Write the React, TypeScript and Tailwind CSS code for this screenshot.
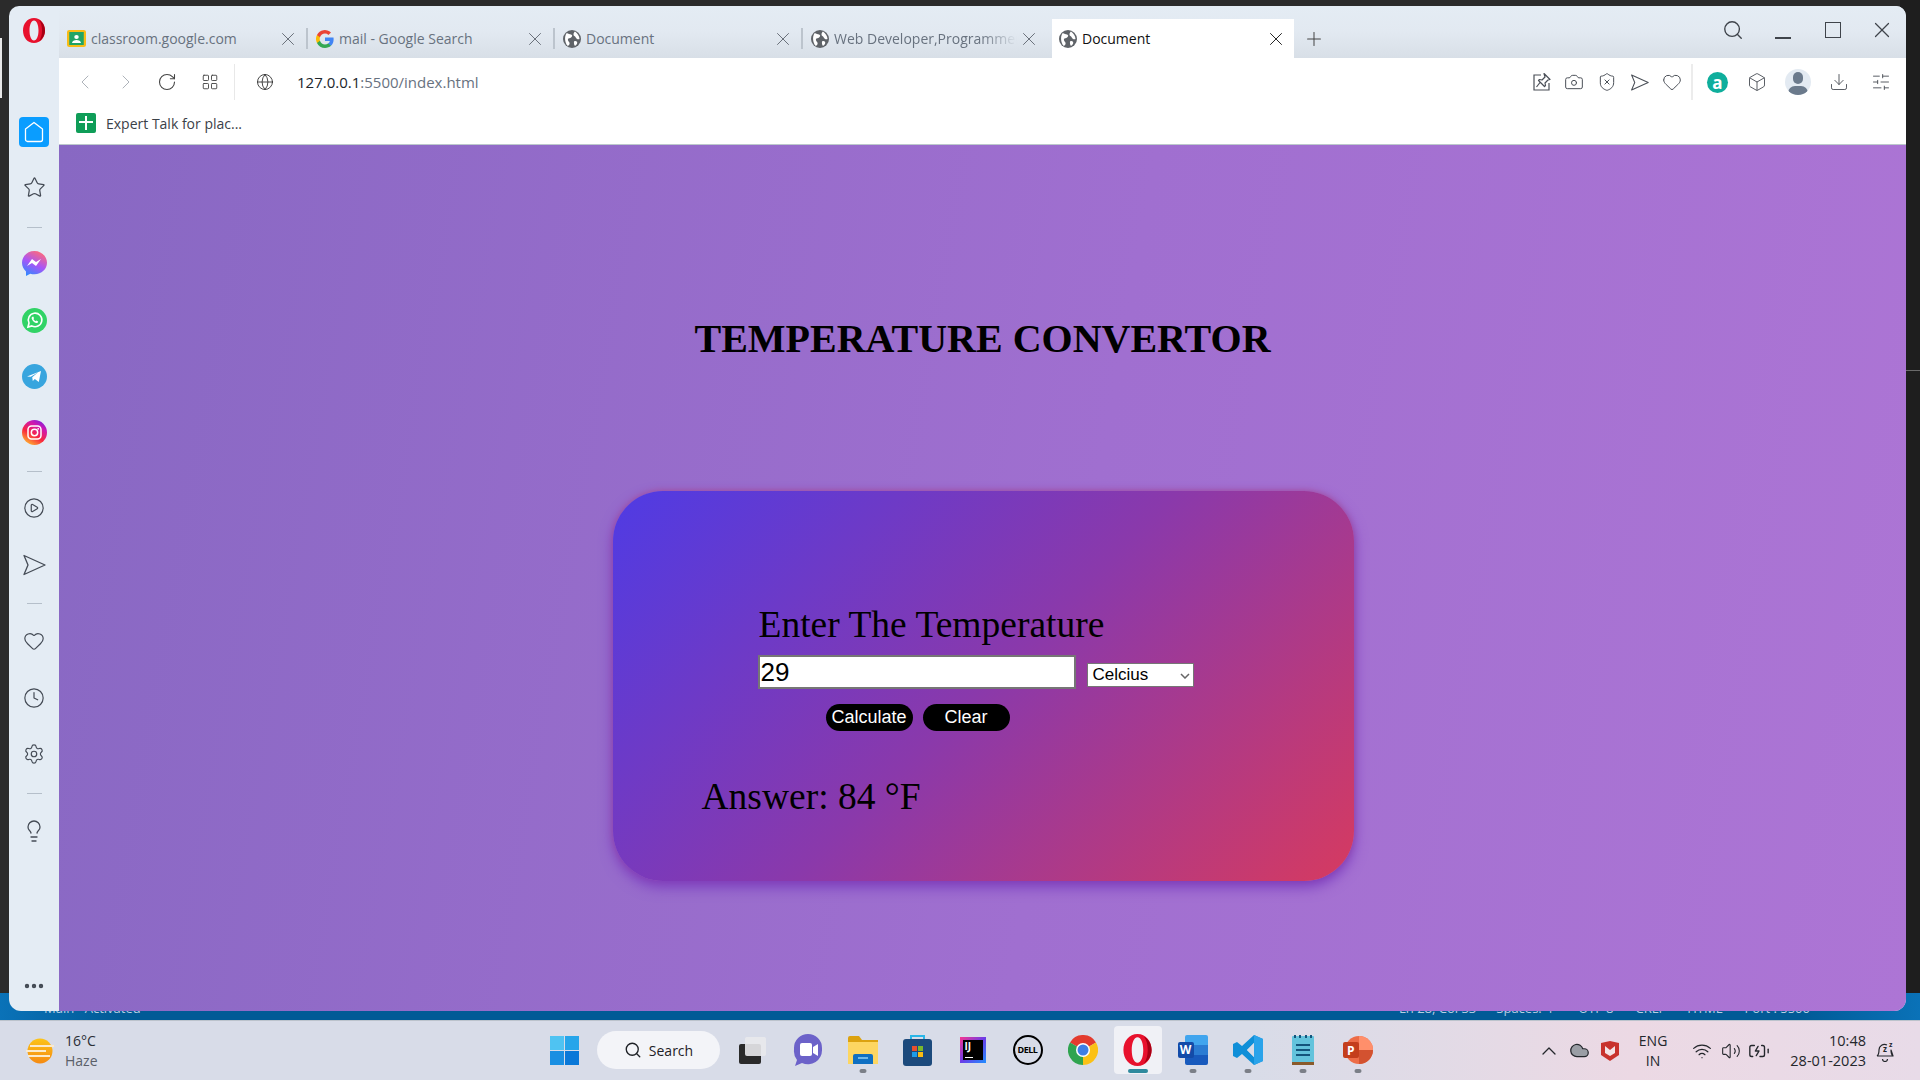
import React from 'react'
import {
  X, Plus, Search, ChevronLeft, ChevronRight, RotateCw, LayoutGrid, Globe, Camera, ShieldX, Heart, Box,
  Download, SlidersHorizontal, Star, CirclePlay, Clock, Settings, Lightbulb, MoreHorizontal, ChevronUp, Cloud, Wifi, Volume2, BatteryCharging,
} from 'lucide-react'

const sans = "font-['Open_Sans','Noto_Sans',sans-serif]"

const Earth = () => (
  <svg width="18" height="18" viewBox="0 0 24 24" className="shrink-0">
    <circle cx="12" cy="12" r="12" fill="#5f6368" />
    <path d="M5 4c3 2 6 1 7 3s-2 4-4 4-2 3 0 5 0 5-2 5C3 18 1 9 5 4zM16 2c3 2 6 6 6 10-2 1-4 0-5-2s-3-2-3-4 1-3 2-4zM15 15c2-1 4 0 4 2s-2 4-3 4-2-5-1-6z" fill="#fff" />
  </svg>
)

const Tab = ({ icon, title, width, active, faded }: { icon: React.ReactNode; title: string; width: string; active?: boolean; faded?: boolean }) => (
  <div className={`flex items-center h-[39px] shrink-0 ${active ? 'pl-[7px] bg-white text-[#111]' : 'pl-[8px] text-[#68727f]'} ${width}`}>
    {icon}
    <span className={`ml-[5px] text-[14px] whitespace-nowrap overflow-hidden flex-1 ${faded ? 'mask-r-from-80%' : ''}`}>{title}</span>
    <X size={22} strokeWidth={1} className={`ml-[1px] shrink-0 ${faded ? 'mr-[12px]' : 'mr-[7px]'} ${active ? 'text-[#111]' : 'text-[#5f6670]'}`} />
  </div>
)

const Divider = () => <div className="w-[2px] h-[21px] mb-[9px] bg-[#bcc4cd] shrink-0" />
const SideRule = ({ className }: { className: string }) => <div className={`w-[15px] h-px bg-[#b5bfca] ${className}`} />

const SendOutline = ({ size, className }: { size: number; className?: string }) => (
  <svg width={size} height={size} viewBox="0 0 24 24" fill="none" stroke="currentColor" strokeWidth="1.300" strokeLinejoin="round" className={className}>
    <path d="M2 2.500L23 12 2 21.500 6 12z" />
  </svg>
)

const OperaO = ({ w = 22, h = 25 }: { w?: number; h?: number }) => (
  <svg width={w} height={h} viewBox="0 0 22 25">
    <path fillRule="evenodd" d="M11 0c6.500 0 11 5.500 11 12.500S17.500 25 11 25 0 19.500 0 12.500 4.500 0 11 0zm0 2.500c-2.800 0-4.500 4.500-4.500 10s1.700 10 4.500 10 4.500-4.500 4.500-10-1.700-10-4.500-10z" fill="#e8112d" />
    <path d="M16 2c3.600 2 6 5.800 6 10.500S19.600 21 16 23c2-2.500 3-6.200 3-10.500S18 4.500 16 2z" fill="#a70014" />
  </svg>
)

const Messenger = () => (
  <svg width="25" height="25" viewBox="0 0 25 25">
    <defs>
      <linearGradient id="msg" x1="0.2" y1="1" x2="0.7" y2="0">
        <stop offset="0" stopColor="#2a8cff" />
        <stop offset="0.5" stopColor="#a855f7" />
        <stop offset="1" stopColor="#ff6a7a" />
      </linearGradient>
    </defs>
    <path d="M12.500 0C5.500 0 0 5.200 0 11.800c0 3.500 1.500 6.500 4 8.600V25l4.300-2.300c1.300.4 2.700.6 4.200.6 7 0 12.500-5.200 12.500-11.500S19.500 0 12.500 0z" fill="url(#msg)" />
    <path d="M5 15l5-7 4 3 5-3-5 7-4-3z" fill="#fff" />
  </svg>
)

const Whatsapp = () => (
  <svg width="25" height="25" viewBox="0 0 25 25">
    <circle cx="12.500" cy="12.500" r="12.500" fill="#31d366" />
    <path d="M6 19l1-4a6.800 6.800 0 1 1 2.800 2.900z" fill="none" stroke="#fff" strokeWidth="1.600" />
    <path d="M10 9c-1 1 0 3 1.500 4.500s3.500 2 4.300 1l.4-1-1.800-1-.8.700c-1-.4-1.800-1.200-2.200-2.100l.7-.8-.9-1.800z" fill="#fff" />
  </svg>
)

const Telegram = () => (
  <svg width="25" height="25" viewBox="0 0 25 25">
    <circle cx="12.500" cy="12.500" r="12.500" fill="#38a5de" />
    <path d="M5 12.500L19 7l-2.200 11-4-3-2 2-.6-3.800 6-5-7.500 4.500z" fill="#fff" />
  </svg>
)

const Instagram = () => (
  <svg width="25" height="25" viewBox="0 0 25 25">
    <defs>
      <linearGradient id="ig" x1="0.2" y1="1" x2="0.8" y2="0">
        <stop offset="0" stopColor="#ffc02e" />
        <stop offset="0.4" stopColor="#f8263f" />
        <stop offset="0.75" stopColor="#d018b0" />
        <stop offset="1" stopColor="#7a22e0" />
      </linearGradient>
    </defs>
    <circle cx="12.500" cy="12.500" r="12.500" fill="url(#ig)" />
    <rect x="6" y="6" width="13" height="13" rx="3.500" fill="none" stroke="#fff" strokeWidth="1.500" />
    <circle cx="12.500" cy="12.500" r="3.200" fill="none" stroke="#fff" strokeWidth="1.500" />
    <circle cx="16.200" cy="8.800" r="0.900" fill="#fff" />
  </svg>
)

const Chrome = () => (
  <svg width="30" height="30" viewBox="0 0 30 30">
    <path d="M15 15L2 7.500A15 15 0 0 1 28 7.500z" fill="#e33b2e" />
    <path d="M15 15L28 7.500A15 15 0 0 1 15 30z" fill="#fbc116" />
    <path d="M15 15L15 30A15 15 0 0 1 2 7.500z" fill="#2fa44f" />
    <circle cx="15" cy="15" r="7" fill="#fff" />
    <circle cx="15" cy="15" r="5.500" fill="#3f7fe6" />
  </svg>
)

const TaskSlot = ({ children, dot, active }: { children: React.ReactNode; dot?: boolean; active?: boolean }) => (
  <div className={`relative w-[48px] h-[48px] mx-[3.500px] flex items-center justify-center rounded-[4px] ${active ? 'bg-[#f0f1f6]' : ''}`}>
    {children}
    {dot && <div className="absolute bottom-[1px] left-1/2 -translate-x-1/2 w-[7px] h-[4px] rounded-full bg-[#7b7f87]" />}
    {active && <div className="absolute bottom-[1px] left-1/2 -translate-x-1/2 w-[20px] h-[4px] rounded-full bg-[#2f8a9e]" />}
  </div>
)

export default function App() {
  return (
    <div className={`w-[1920px] h-[1080px] flex flex-col overflow-hidden ${sans}`}>
      <div className="relative h-[1020px] bg-[linear-gradient(90deg,#2b2b2b_0px,#2b2b2b_1900px,#1e1e1e_1900px)] pt-[6px] pl-[9px]">
        <div className="absolute left-0 top-[38px] w-[2px] h-[60px] bg-[#e8e8e8]" />
        <div className="absolute right-0 top-[370px] w-[14px] h-px bg-[#6a6a6a]" />
        {/* vscode status bar peeking out behind the browser */}
        <div className="absolute bottom-0 left-0 right-0 h-[27px] pt-[4px] leading-[22px] text-[13px] text-[#b5cfe2] flex bg-[linear-gradient(90deg,#0a72b8_0px,#015a96_120px,#015a96_1800px,#0a72b8_1920px)]">
          <span className="ml-[44px]">Main* Activated</span>
          <span className="mr-[20px] ml-auto">Ln 28, Col 33</span>
          <span className="mr-[26px]">Spaces: 4</span>
          <span className="mr-[22px]">UTF-8</span>
          <span className="mr-[22px]">CRLF</span>
          <span className="mr-[22px]">HTML</span>
          <span className="mr-[110px]">Port : 5500</span>
        </div>

        <div className="relative w-[1897px] h-[1005px] rounded-t-[10px] rounded-b-[12px] overflow-hidden flex bg-[#e4ecf4]">
          <aside className="w-[50px] flex flex-col items-center shrink-0 pt-[12px] text-[#444b55]">
            <div className="h-[21px] mb-[78px]"><OperaO /></div>
            <div className="w-[30px] h-[30px] rounded-[4px] bg-[#0a9dff] flex items-center justify-center shrink-0">
              <svg width="20" height="22" viewBox="0 0 20 22" fill="none" stroke="#fff" strokeWidth="1.300">
                <path d="M10 1.500L18.500 8v10.500a2 2 0 0 1-2 2h-13a2 2 0 0 1-2-2V8z" strokeLinejoin="round" />
              </svg>
            </div>
            <Star size={23} strokeWidth={1.300} className="mt-[29px] shrink-0" />
            <SideRule className="mt-[28px]" />
            <div className="mt-[23px]"><Messenger /></div>
            <div className="mt-[32px]"><Whatsapp /></div>
            <div className="mt-[31px]"><Telegram /></div>
            <div className="mt-[31px]"><Instagram /></div>
            <SideRule className="mt-[26px]" />
            <CirclePlay size={22} strokeWidth={1.300} className="mt-[25px] shrink-0" />
            <SendOutline size={24} className="mt-[34px] shrink-0" />
            <SideRule className="mt-[26px]" />
            <Heart size={22} strokeWidth={1.300} className="mt-[26px] shrink-0" />
            <Clock size={22} strokeWidth={1.300} className="mt-[35px] shrink-0" />
            <Settings size={22} strokeWidth={1.300} className="mt-[34px] shrink-0" />
            <SideRule className="mt-[28px]" />
            <Lightbulb size={24} strokeWidth={1.300} className="mt-[25px] shrink-0" />
            <MoreHorizontal size={24} strokeWidth={2.400} className="mt-auto mb-[13px] shrink-0" />
          </aside>

          <main className="flex-1 flex flex-col min-w-0">
            <div className="h-[52px] flex items-end bg-[linear-gradient(180deg,#e4ecf4_0%,#e2e9f1_50%,#d8dfe7_100%)] relative shrink-0">
              <Tab width="w-[247px]" title="classroom.google.com" icon={
                <svg width="19" height="17" viewBox="0 0 17 17" className="shrink-0" preserveAspectRatio="none">
                  <rect width="17" height="17" rx="2" fill="#f9bc15" />
                  <rect x="2" y="2" width="13" height="13" fill="#21a465" />
                  <circle cx="8.500" cy="7" r="2" fill="#fff" />
                  <path d="M4.500 13c0-2 2-3 4-3s4 1 4 3z" fill="#fff" />
                </svg>} />
              <Divider />
              <Tab width="w-[245px]" title="mail - Google Search" icon={
                <svg width="18" height="18" viewBox="0 0 24 24" className="shrink-0">
                  <path d="M23.500 12.300c0-.8-.1-1.600-.2-2.300H12v4.500h6.500a5.500 5.500 0 0 1-2.400 3.600v3h3.900c2.300-2.100 3.500-5.200 3.500-8.800z" fill="#4285f4" />
                  <path d="M12 24c3.200 0 6-1.100 8-2.900l-3.900-3c-1.100.7-2.500 1.200-4.100 1.200-3.100 0-5.800-2.100-6.700-5H1.300v3.100A12 12 0 0 0 12 24z" fill="#34a853" />
                  <path d="M5.300 14.300a7.200 7.200 0 0 1 0-4.600V6.600h-4a12 12 0 0 0 0 10.800z" fill="#fbbc05" />
                  <path d="M12 4.800c1.800 0 3.300.6 4.600 1.800L20 3.200A12 12 0 0 0 1.300 6.600l4 3.100c.9-2.800 3.600-4.900 6.700-4.900z" fill="#ea4335" />
                </svg>} />
              <Divider />
              <Tab width="w-[246px]" title="Document" icon={<Earth />} />
              <Divider />
              <Tab width="w-[249px]" faded title="Web Developer,Programmer" icon={<Earth />} />
              <Tab width="w-[242px]" active title="Document" icon={<Earth />} />
              <Plus size={22} strokeWidth={1.100} className="ml-[9px] mb-[8px] text-[#444]" />
              <div className="absolute right-0 top-[11px] h-[26px] flex items-center text-[#3f444b]">
                <Search size={22} strokeWidth={1.500} className="mr-[31px]" />
                <div className="w-[16px] h-[1.500px] bg-[#3f444b] mr-[34px] translate-y-[8px]" />
                <div className="w-[16px] h-[16px] border border-[#3f444b] mr-[28px]" />
                <X size={26} strokeWidth={1.100} className="mr-[11px]" />
              </div>
            </div>

            <div className="h-[48px] bg-white flex items-center shrink-0 relative">
              <ChevronLeft size={24} strokeWidth={1} className="ml-[14px] text-[#aeb3ba]" />
              <ChevronRight size={24} strokeWidth={1} className="ml-[17px] text-[#aeb3ba]" />
              <RotateCw size={20} strokeWidth={1.300} className="ml-[19px] text-[#444]" />
              <LayoutGrid size={18} strokeWidth={1.200} className="ml-[24px] text-[#444]" />
              <div className="w-px h-[36px] bg-[#e8e8e8] ml-[15px]" />
              <Globe size={18} strokeWidth={1.200} className="ml-[21px] text-[#333]" />
              <span className="ml-[23px] text-[15px]"><span className="text-[#20252b]">127.0.0.1</span><span className="text-[#68727f]">:5500/index.html</span></span>
              <div className="ml-auto flex items-center text-[#4a4f57]">
                <svg width="20" height="20" viewBox="0 0 20 20" fill="none" stroke="currentColor" strokeWidth="1.200" className="mr-[12px]">
                  <path d="M9 3H2v15h15v-7" />
                  <path d="M12 1.500l6 6-2 .5-3 3 .5 2.500-1 1-6-6 1-1 2.500.5 3-3zM8 10.500L4.500 15" strokeLinejoin="round" />
                </svg>
                <Camera size={20} strokeWidth={1.200} className="mr-[13px]" />
                <ShieldX size={20} strokeWidth={1.200} className="mr-[13px]" />
                <SendOutline size={19} className="mr-[13px]" />
                <Heart size={20} strokeWidth={1.200} className="mr-[9px]" />
                <div className="w-[2px] h-[36px] bg-[#ececec] mr-[14.500px]" />
                <div className="w-[21px] h-[21px] rounded-full bg-[#0fae9c] text-white text-[17px] font-bold flex items-center justify-center leading-none mr-[19px]">a</div>
                <Box size={20} strokeWidth={1.100} className="mr-[18px]" />
                <div className="w-[26px] h-[26px] rounded-full bg-[#e3eaf2] relative overflow-hidden mr-[18px]">
                  <div className="absolute left-[8px] top-[3px] w-[10px] h-[12px] rounded-full bg-[#6b7a8c]" />
                  <div className="absolute left-[3px] top-[17px] w-[20px] h-[14px] rounded-full bg-[#6b7a8c]" />
                </div>
                <Download size={20} strokeWidth={1.100} className="mr-[22px]" />
                <SlidersHorizontal size={20} strokeWidth={1.100} className="mr-[15px]" />
              </div>
            </div>

            <div className="h-[39px] bg-white flex items-center shrink-0 pl-[17px] pb-[4px] border-b border-[#bcc8cc]">
              <svg width="20" height="20" viewBox="0 0 20 20">
                <rect width="20" height="20" rx="2" fill="#0f9d58" />
                <path d="M9 3h2v5h6v2h-6v7H9v-7H3V8h6z" fill="#fff" />
              </svg>
              <span className="ml-[10px] text-[14px] text-[#3b4148]">Expert Talk for plac...</span>
            </div>

            <section className="flex-1 flex flex-col items-center bg-[linear-gradient(100deg,#8868c3_0%,#a06fd0_55%,#ad75d5_100%)] font-['Liberation_Serif',serif] text-black">
              <h1 className="mt-[171px] text-[40px] leading-[46px] font-bold">TEMPERATURE CONVERTOR</h1>
              <div className="mt-[129px] ml-[1px] w-[741px] h-[390px] rounded-[50px] bg-[linear-gradient(135deg,#4f3be4_0%,#8a39ab_50%,#d63a60_100%)] shadow-[0_6px_14px_#7a3cc0,0_0_6px_#b0508f] flex flex-col">
                <div className="ml-[146px] mt-[111px] text-[37.500px] leading-[46px]">Enter The Temperature</div>
                <div className="ml-[145px] mt-[7px] flex items-end font-['Liberation_Sans',sans-serif]">
                  <input readOnly value="29" className="w-[318px] h-[34px] bg-white border-2 border-[#767676] px-[1px] text-[26px] text-black outline-none" />
                  <div className="ml-[11px] mb-[2px] w-[107px] h-[24px] bg-white border border-[#767676] flex items-center pl-[5px] text-[17px] relative">
                    Celcius
                    <svg width="10" height="6" viewBox="0 0 10 6" className="absolute right-[3px] top-[9px]"><path d="M1 1l4 4 4-4" fill="none" stroke="#666" strokeWidth="1.500" /></svg>
                  </div>
                </div>
                <div className="ml-[213px] mt-[15px] flex gap-[10px] font-['Liberation_Sans',sans-serif]">
                  <button className="w-[87px] h-[27px] rounded-full bg-black text-white text-[18px]">Calculate</button>
                  <button className="w-[87px] h-[27px] rounded-full bg-black text-white text-[18px]">Clear</button>
                </div>
                <div className="ml-[89px] mt-[43px] text-[37.500px] leading-[46px]">Answer: 84 °F</div>
              </div>
            </section>
          </main>
        </div>
      </div>

      <footer className="h-[60px] relative flex items-center justify-center pb-[1px] bg-[linear-gradient(90deg,#d8dce8_0%,#d8dce8_65%,#ecd9e4_85%,#e8dbe8_100%)] border-t border-[#bcc3cc] shrink-0">
        <div className="absolute left-[26px] top-0 h-full flex items-center">
          <svg width="28" height="28" viewBox="0 0 28 28">
            <defs>
              <linearGradient id="sun" x1="0" y1="0" x2="0" y2="1">
                <stop offset="0" stopColor="#fcc419" />
                <stop offset="1" stopColor="#f58a12" />
              </linearGradient>
            </defs>
            <circle cx="14" cy="14" r="12.500" fill="url(#sun)" />
            <path d="M4 9h24M0 14h20M2 19h22" stroke="#fbeacb" strokeWidth="2" />
          </svg>
          <div className="ml-[11px] text-[14px] leading-[20px] text-[#2b2f36]">
            <div>16°C</div>
            <div className="text-[#5a5f68]">Haze</div>
          </div>
        </div>

        <div className="flex items-center ml-[2px]">
          <TaskSlot>
            <div className="grid grid-cols-2 gap-[1px] w-[29px] h-[29px]">
              <div className="bg-[#4fc3f2]" /><div className="bg-[#26a5ea]" /><div className="bg-[#1a8fe2]" /><div className="bg-[#0a78d8]" />
            </div>
          </TaskSlot>
          <div className="ml-[5px] mr-[5px] w-[123px] h-[38px] rounded-full bg-[#f3f4f8] flex items-center justify-center text-[14px] text-[#1e2126]">
            <Search size={18} strokeWidth={1.800} className="mr-[7px]" />Search
          </div>
          <TaskSlot>
            <div className="relative w-[27px] h-[27px]">
              <div className="absolute left-0 bottom-0 w-[22px] h-[20px] rounded-[2px] bg-[#2a2a2a]" />
              <div className="absolute right-0 top-0 w-[21px] h-[19px] rounded-[2px] bg-[#e9e9ec]/90" />
            </div>
          </TaskSlot>
          <TaskSlot>
            <svg width="30" height="32" viewBox="0 0 30 32">
              <path d="M15 0a14 14 0 0 1 14 14v2A14 14 0 0 1 9 29l-7 3 2-6A14 14 0 0 1 1 16v-2A14 14 0 0 1 15 0z" fill="#6c62c9" />
              <rect x="7" y="9" width="12" height="13" rx="2" fill="#fff" />
              <path d="M20 13l5-3v12l-5-3z" fill="#fff" />
            </svg>
          </TaskSlot>
          <TaskSlot dot>
            <svg width="30" height="28" viewBox="0 0 30 28">
              <path d="M0 2a2 2 0 0 1 2-2h9l3 4h16v24H0z" fill="#dca20f" />
              <path d="M0 6h30v22H0z" fill="#fdd661" />
              <path d="M5 20a2 2 0 0 1 2-2h16a2 2 0 0 1 2 2v8H5z" fill="#0f6fc2" />
              <path d="M10 22h10" stroke="#8fd0f7" strokeWidth="1.500" />
            </svg>
          </TaskSlot>
          <TaskSlot>
            <svg width="29" height="32" viewBox="0 0 29 32">
              <path d="M8 6V2h13v4" fill="none" stroke="#29b6e8" strokeWidth="2" />
              <rect y="5" width="29" height="27" rx="3" fill="#1c4a7c" />
              <rect x="9" y="12" width="5" height="5" fill="#e8502e" /><rect x="15" y="12" width="5" height="5" fill="#7ab82c" />
              <rect x="9" y="18" width="5" height="5" fill="#1e9ce8" /><rect x="15" y="18" width="5" height="5" fill="#fbbc12" />
            </svg>
          </TaskSlot>
          <TaskSlot>
            <div className="w-[26px] h-[26px] bg-[linear-gradient(135deg,#f9348f,#6a3de8_50%,#1f8fff)] p-[3px]">
              <div className="w-full h-full bg-black text-white text-[10px] font-bold leading-[11px] pl-[2px] pt-[1px]">IJ
                <div className="w-[8px] h-px bg-white mt-[5px]" />
              </div>
            </div>
          </TaskSlot>
          <TaskSlot>
            <div className="w-[30px] h-[30px] rounded-full border-[2.500px] border-black flex items-center justify-center text-[9px] font-bold tracking-[-0.5px] text-black">DELL</div>
          </TaskSlot>
          <TaskSlot><Chrome /></TaskSlot>
          <TaskSlot active><OperaO w={29} h={32} /></TaskSlot>
          <TaskSlot dot>
            <div className="relative w-[30px] h-[30px]">
              <div className="absolute left-[7px] top-0 w-[23px] h-[30px] rounded-[2px] bg-[linear-gradient(180deg,#41a5ee_0%,#41a5ee_33%,#2b7cd3_33%,#2b7cd3_66%,#185abd_66%)]" />
              <div className="absolute left-0 top-[7px] w-[16px] h-[16px] rounded-[2px] bg-[#134ba8] text-white text-[12px] font-bold flex items-center justify-center">W</div>
            </div>
          </TaskSlot>
          <TaskSlot dot>
            <svg width="30" height="30" viewBox="0 0 30 30">
              <path d="M21 0l9 4v22l-9 4-12-11-5 4-4-2V9l4-2 5 4zM21 8l-7 7 7 7z" fill="#0f8fd8" fillRule="evenodd" />
              <path d="M21 0l9 4v22l-9 4z" fill="#2aa3ea" />
              <path d="M21 8l-7 7 7 7z" fill="#d8dce8" />
            </svg>
          </TaskSlot>
          <TaskSlot dot>
            <svg width="22" height="30" viewBox="0 0 22 30">
              <rect y="1" width="22" height="28" rx="1" fill="#63c3dc" />
              <rect y="27" width="22" height="3" fill="#8a5a2b" />
              <path d="M4 10h14M4 15h14M4 20h14" stroke="#13557c" strokeWidth="2" />
              <path d="M3 0v3M8 0v3M14 0v3M19 0v3" stroke="#13557c" strokeWidth="2" />
            </svg>
          </TaskSlot>
          <TaskSlot dot>
            <svg width="30" height="30" viewBox="0 0 30 30">
              <circle cx="16" cy="15" r="14" fill="#ed6c47" />
              <path d="M16 1a14 14 0 0 1 14 14H16z" fill="#ff8f6b" />
              <path d="M16 15h14a14 14 0 0 1-14 14z" fill="#d35230" />
              <rect x="0" y="7" width="16" height="16" rx="2" fill="#c43e1c" />
              <text x="4" y="20" fontSize="12" fontWeight="700" fill="#fff" fontFamily="Open Sans">P</text>
            </svg>
          </TaskSlot>
        </div>

        <div className="absolute right-[24px] top-0 h-full flex items-center text-[#24272c]">
          <ChevronUp size={24} strokeWidth={1.300} />
          <Cloud size={21} strokeWidth={1.400} fill="#9a9ea5" className="ml-[8px]" />
          <svg width="18" height="20" viewBox="0 0 18 20" className="ml-[11px]">
            <path d="M0 2l9-2 9 2v12l-9 6-9-6z" fill="#c8332d" />
            <path d="M4 5l5 4 5-4v7l-5 3-5-3z" fill="#f3e4e6" />
          </svg>
          <div className="ml-[20px] text-[14px] leading-[20px] text-center">ENG<br />IN</div>
          <Wifi size={20} strokeWidth={1.500} className="ml-[25px]" />
          <Volume2 size={20} strokeWidth={1.300} className="ml-[9px]" />
          <BatteryCharging size={22} strokeWidth={1.500} className="ml-[7px]" />
          <div className="ml-[20px] text-[14.500px] leading-[20px] text-right">10:48<br />28-01-2023</div>
          <svg width="22" height="22" viewBox="0 0 22 22" fill="none" stroke="currentColor" strokeWidth="1.200" className="ml-[8px]">
            <path d="M3 16c2-1.500 2-3 2-6a5.500 5.500 0 0 1 8-5M17 10c0 3 0 4.500 2 6zM3 16h16M8.500 19a2.500 2.500 0 0 0 5 0" strokeLinejoin="round" />
            <text x="9" y="12" fontSize="8" fontWeight="700" fill="currentColor" stroke="none" fontFamily="Open Sans">z</text>
            <text x="15" y="7" fontSize="7" fontWeight="700" fill="currentColor" stroke="none" fontFamily="Open Sans">z</text>
          </svg>
        </div>
      </footer>
    </div>
  )
}
